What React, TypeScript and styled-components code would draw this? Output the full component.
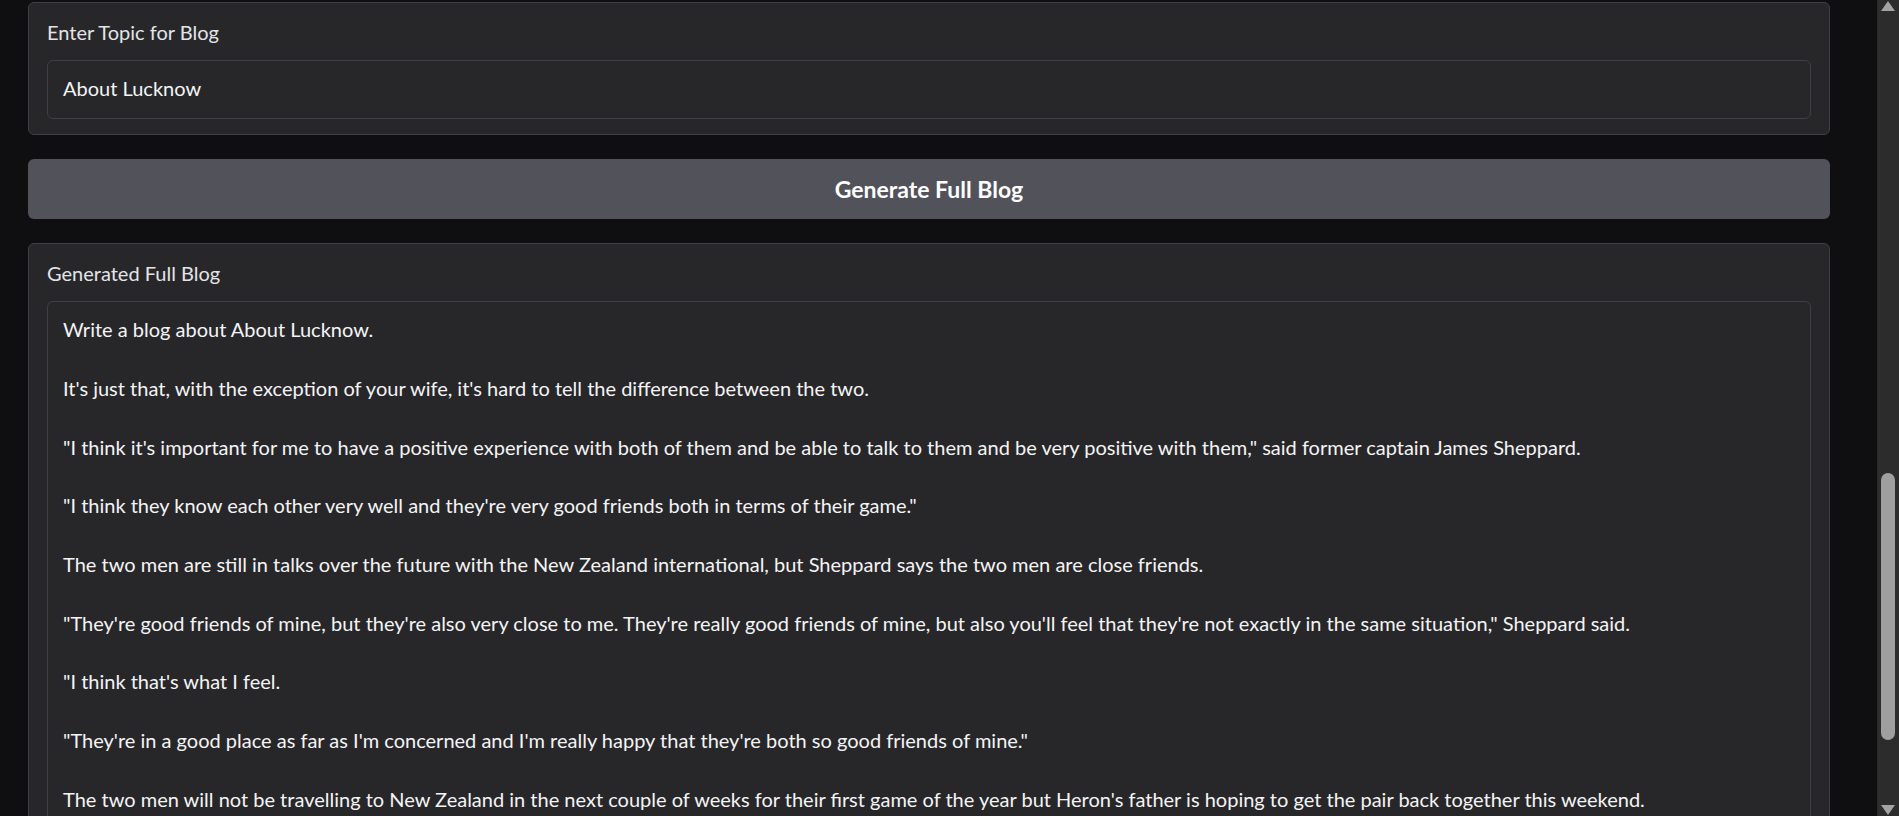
import styled, { createGlobalStyle } from "styled-components";

const GlobalStyle = createGlobalStyle`
  html, body {
    margin: 0;
    padding: 0;
    height: 100%;
    overflow: hidden;
    background: #0f0f11;
  }
  #root {
    height: 100%;
  }
`;

const Page = styled.div`
  display: flex;
  height: 100vh;
  font-family: Lato, "Liberation Sans", sans-serif;
  color: #f4f4f5;
`;

const Main = styled.div`
  flex: 1;
  overflow: hidden;
  padding: 2px 0 0 28px;
`;

const Column = styled.div`
  width: 1802px;
  display: flex;
  flex-direction: column;
  gap: 24px;
`;

const Block = styled.div`
  box-sizing: border-box;
  background: #27272a;
  border: 1px solid #3f3f46;
  border-radius: 6px;
  padding: 14px 18px 15px;
  display: flex;
  flex-direction: column;
  gap: 13px;
`;

const Label = styled.span`
  font-size: 20px;
  line-height: 30px;
  color: #e4e4e7;
`;

const Field = styled.div`
  box-sizing: border-box;
  border: 1px solid #3f3f46;
  border-radius: 6px;
  background: #27272a;
  padding: 13px 15px 15px;
  font-size: 20px;
  line-height: 29.35px;
  color: #f4f4f5;
  white-space: pre-wrap;
`;

const GenerateButton = styled.button`
  box-sizing: border-box;
  height: 60px;
  border: none;
  border-radius: 6px;
  background: #52525b;
  color: #ffffff;
  font-family: Lato, "Liberation Sans", sans-serif;
  font-size: 23px;
  font-weight: 700;
  cursor: pointer;
`;

const Scrollbar = styled.div`
  width: 22px;
  background: #2c2c2c;
  display: flex;
  flex-direction: column;
  align-items: center;
`;

const Arrow = styled.svg`
  display: block;
  flex: none;
`;

const Track = styled.div`
  flex: 1;
  width: 100%;
  display: flex;
  justify-content: center;
`;

const Thumb = styled.div`
  width: 14px;
  border-radius: 7px;
  background: #9f9f9f;
`;

const blogText = [
  "Write a blog about About Lucknow.",
  "It's just that, with the exception of your wife, it's hard to tell the difference between the two.",
  "\"I think it's important for me to have a positive experience with both of them and be able to talk to them and be very positive with them,\" said former captain James Sheppard.",
  "\"I think they know each other very well and they're very good friends both in terms of their game.\"",
  "The two men are still in talks over the future with the New Zealand international, but Sheppard says the two men are close friends.",
  "\"They're good friends of mine, but they're also very close to me. They're really good friends of mine, but also you'll feel that they're not exactly in the same situation,\" Sheppard said.",
  "\"I think that's what I feel.",
  "\"They're in a good place as far as I'm concerned and I'm really happy that they're both so good friends of mine.\"",
  "The two men will not be travelling to New Zealand in the next couple of weeks for their first game of the year but Heron's father is hoping to get the pair back together this weekend.",
].join("\n\n");

export default function App() {
  return (
    <>
      <GlobalStyle />
      <Page>
        <Main>
          <Column>
            <Block>
              <Label>Enter Topic for Blog</Label>
              <Field>About Lucknow</Field>
            </Block>
            <GenerateButton>Generate Full Blog</GenerateButton>
            <Block>
              <Label>Generated Full Blog</Label>
              <Field>{blogText}</Field>
            </Block>
          </Column>
        </Main>
        <Scrollbar>
          <Arrow width="22" height="12" viewBox="0 0 22 12">
            <polygon points="11,1 18,11 4,11" fill="#a3a3a3" />
          </Arrow>
          <Track>
            <Thumb style={{ marginTop: 461, height: 267 }} />
          </Track>
          <Arrow width="22" height="12" viewBox="0 0 22 12">
            <polygon points="4,1 18,1 11,11" fill="#a3a3a3" />
          </Arrow>
        </Scrollbar>
      </Page>
    </>
  );
}
